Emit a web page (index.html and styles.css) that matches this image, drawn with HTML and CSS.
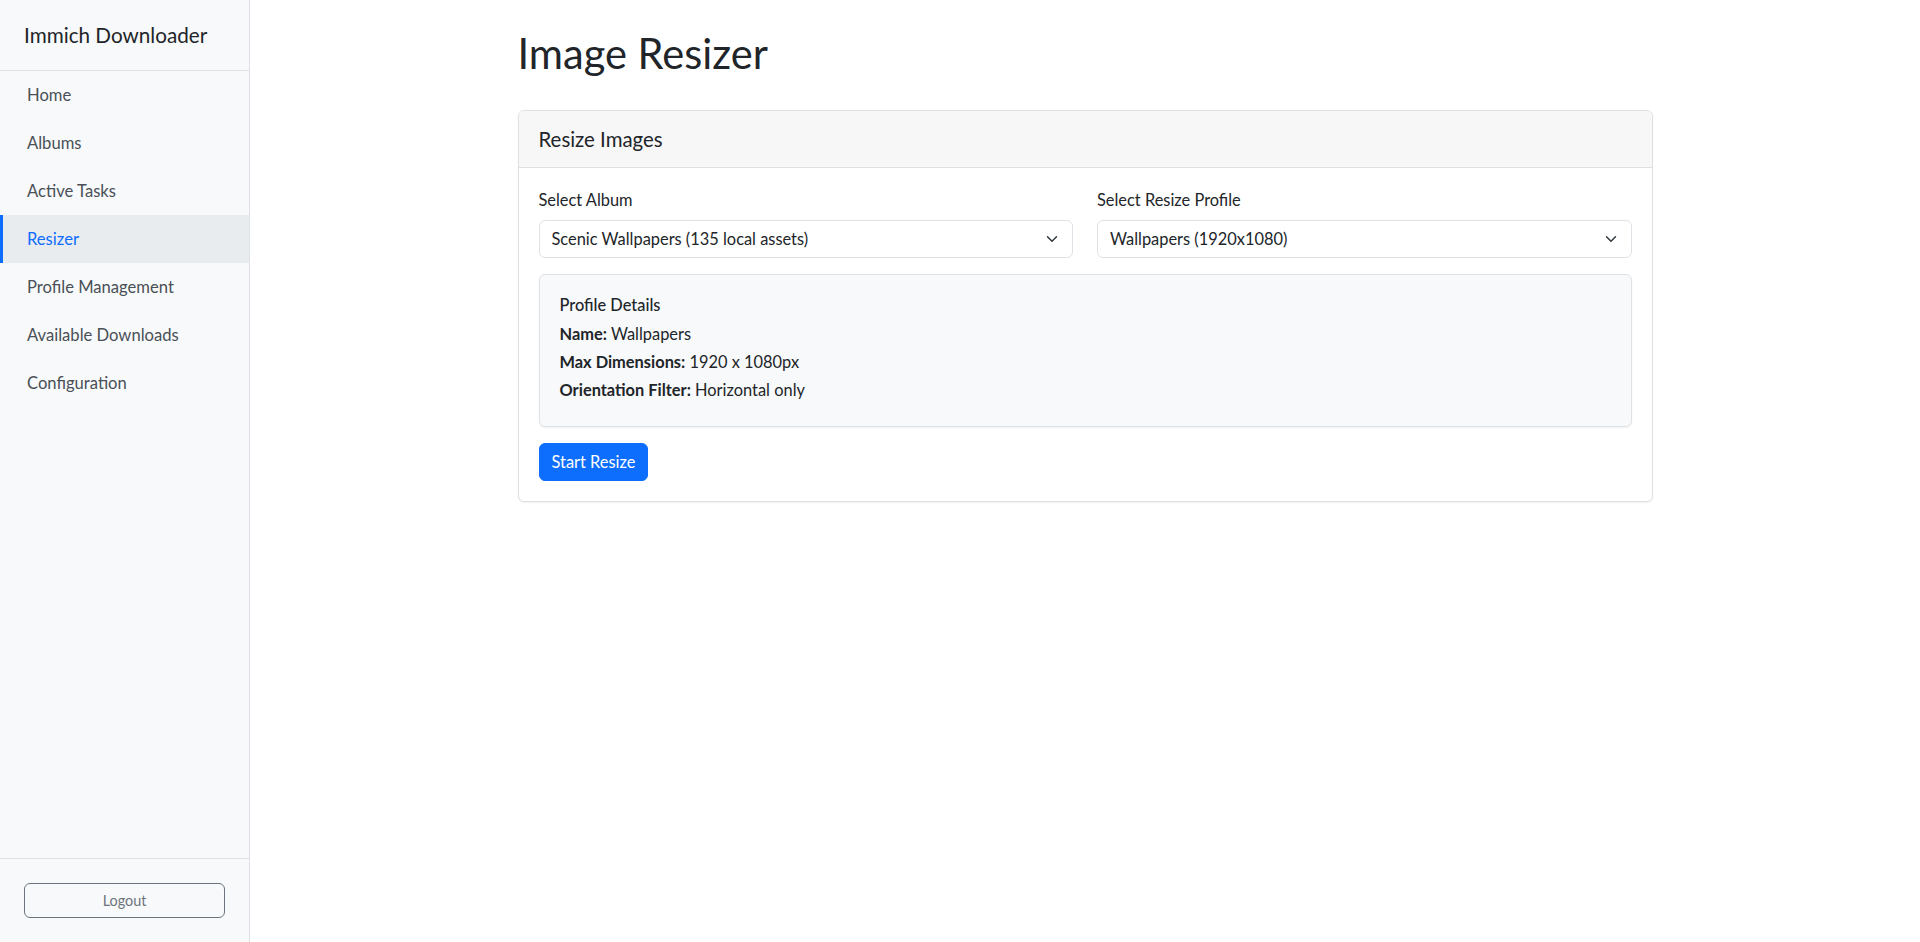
FILE: index.html
```html
<!DOCTYPE html>
<html lang="en">
<head>
<meta charset="utf-8">
<title>Immich Downloader - Image Resizer</title>
<link rel="stylesheet" href="styles.css">
</head>
<body>
<div class="layout">
  <aside class="sidebar">
    <div class="brand">Immich Downloader</div>
    <nav class="nav">
      <a class="nav-link" href="#">Home</a>
      <a class="nav-link" href="#">Albums</a>
      <a class="nav-link" href="#">Active Tasks</a>
      <a class="nav-link active" href="#">Resizer</a>
      <a class="nav-link" href="#">Profile Management</a>
      <a class="nav-link" href="#">Available Downloads</a>
      <a class="nav-link" href="#">Configuration</a>
    </nav>
    <div class="sidebar-footer">
      <button class="btn-logout" type="button">Logout</button>
    </div>
  </aside>
  <main class="main">
    <div class="container">
      <h1 class="page-title">Image Resizer</h1>
      <section class="card">
        <div class="card-header">Resize Images</div>
        <div class="card-body">
          <div class="row">
            <div class="col">
              <label class="form-label">Select Album</label>
              <div class="select-wrap">
                <div class="form-select">Scenic Wallpapers (135 local assets)</div>
                <svg class="chevron" width="12" height="12" viewBox="0 0 16 16"><path d="M2 5l6 6 6-6" fill="none" stroke="#343a40" stroke-width="2" stroke-linecap="round" stroke-linejoin="round"/></svg>
              </div>
            </div>
            <div class="col">
              <label class="form-label">Select Resize Profile</label>
              <div class="select-wrap">
                <div class="form-select">Wallpapers (1920x1080)</div>
                <svg class="chevron" width="12" height="12" viewBox="0 0 16 16"><path d="M2 5l6 6 6-6" fill="none" stroke="#343a40" stroke-width="2" stroke-linecap="round" stroke-linejoin="round"/></svg>
              </div>
            </div>
          </div>
          <div class="details">
            <h6 class="details-title">Profile Details</h6>
            <p class="detail"><strong>Name:</strong> Wallpapers</p>
            <p class="detail"><strong>Max Dimensions:</strong> 1920 x 1080px</p>
            <p class="detail"><strong>Orientation Filter:</strong> Horizontal only</p>
          </div>
          <button class="btn-primary" type="button">Start Resize</button>
        </div>
      </section>
    </div>
  </main>
</div>
</body>
</html>
```
FILE: styles.css
```css
* { box-sizing: border-box; }
html, body { margin: 0; padding: 0; height: 100%; }
body {
  font-family: "Lato", "Open Sans", sans-serif;
  font-size: 16.4px;
  line-height: 24px;
  color: #212529;
  background: #fff;
}
.layout { display: flex; height: 942px; }
.sidebar {
  width: 250px;
  flex: 0 0 250px;
  background: #f8f9fa;
  border-right: 1px solid #dee2e6;
  display: flex;
  flex-direction: column;
}
.brand {
  padding: 23px 24px 23px;
  font-size: 20.7px;
  line-height: 24px;
  border-bottom: 1px solid #dee2e6;
  color: #212529;
}
.nav { display: flex; flex-direction: column; flex: 1; }
.nav-link {
  display: block;
  padding: 12px 24px;
  border-left: 3px solid transparent;
  color: #495057;
  text-decoration: none;
  line-height: 24px;
  font-size: 16.6px;
}
.nav-link.active {
  color: #0d6efd;
  background: #e9ecef;
  border-left-color: #0d6efd;
}
.sidebar-footer {
  border-top: 1px solid #dee2e6;
  padding: 24px;
}
.btn-logout {
  display: block;
  width: 100%;
  font-family: inherit;
  font-size: 14.4px;
  line-height: 21px;
  padding: 6px 12px;
  color: #6c757d;
  background: transparent;
  border: 1px solid #6c757d;
  border-radius: 6px;
}
.main { flex: 1; }
.container {
  max-width: 1135px;
  margin: 0 auto;
  padding-top: 29px;
}
.page-title {
  margin: 0 0 33px;
  font-size: 41.6px;
  line-height: 48px;
  font-weight: 400;
}
.card {
  border: 1px solid #dfe0e1;
  border-radius: 6px;
  background: #fff;
  box-shadow: 0 1px 2px rgba(0,0,0,0.06);
  overflow: hidden;
}
.card-header {
  padding: 16px 20px;
  font-size: 20.4px;
  line-height: 24px;
  background: #f7f7f8;
  border-bottom: 1px solid #dfe0e1;
}
.card-body { padding: 20px 20px 20px; }
.row { display: flex; gap: 24px; }
.col { flex: 1; min-width: 0; }
.form-label { display: block; margin-bottom: 8px; }
.select-wrap { position: relative; }
.form-select {
  height: 38px;
  padding: 6px 36px 6px 12px;
  border: 1px solid #dee2e6;
  border-radius: 6px;
  background: #fff;
  white-space: nowrap;
}
.chevron { position: absolute; right: 15px; top: 13px; }
.details {
  margin-top: 16px;
  padding: 20px 20px 20px;
  background: #f8f9fa;
  border: 1px solid #dee2e6;
  border-radius: 6px;
  box-shadow: 0 1px 2px rgba(0,0,0,0.06);
}
.details-title {
  margin: 0 0 8px;
  font-size: 16.4px;
  line-height: 19.2px;
  font-weight: 500;
}
.detail { margin: 0 0 4px; }
.detail strong { font-weight: 700; }
.btn-primary {
  margin-top: 16px;
  font-family: inherit;
  font-size: 16.4px;
  line-height: 24px;
  padding: 6px 12px;
  color: #fff;
  background: #0d6efd;
  border: 1px solid #0d6efd;
  border-radius: 6px;
}
```
